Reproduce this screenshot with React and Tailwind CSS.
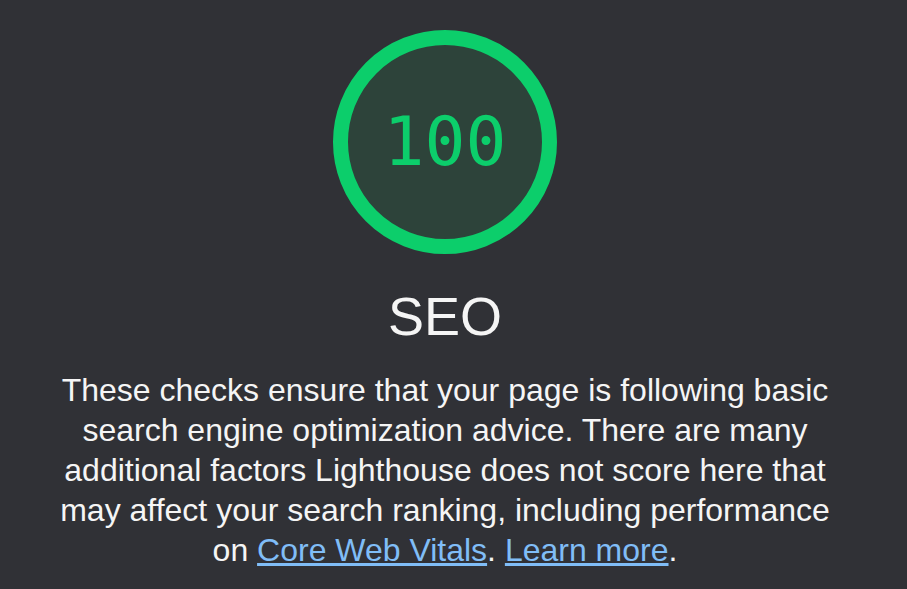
export default function App() {
  return (
    <div className="min-h-[589px] w-full bg-[#303136]">
      <div className="w-[890px] flex flex-col items-center pt-[30px] font-['Liberation_Sans',Arial,sans-serif]">
        {/* Gauge */}
        <div className="relative w-[224px] h-[224px]">
          <svg viewBox="0 0 224 224" className="w-[224px] h-[224px]">
            <circle cx="112" cy="112" r="104.5" fill="#2d433a" stroke="#0cce6b" strokeWidth="15" />
          </svg>
          <div className="absolute inset-0 flex items-center justify-center text-[#0cce6b] text-[68px] font-['DejaVu_Sans_Mono',monospace]">
            100
          </div>
        </div>

        <h2 className="mt-[32px] text-[54px] leading-[60px] text-[#f5f5f5]">SEO</h2>

        <p className="mt-[24px] w-[790px] text-center text-[32px] leading-[40px] text-[#f5f5f5]">
          These checks ensure that your page is following basic search engine optimization advice. There are many additional factors Lighthouse does not score here that may affect your search ranking, including performance on{" "}
          <a href="#" className="text-[#80bdf7] underline">Core Web Vitals</a>.{" "}
          <a href="#" className="text-[#80bdf7] underline">Learn more</a>.
        </p>
      </div>
    </div>
  );
}
